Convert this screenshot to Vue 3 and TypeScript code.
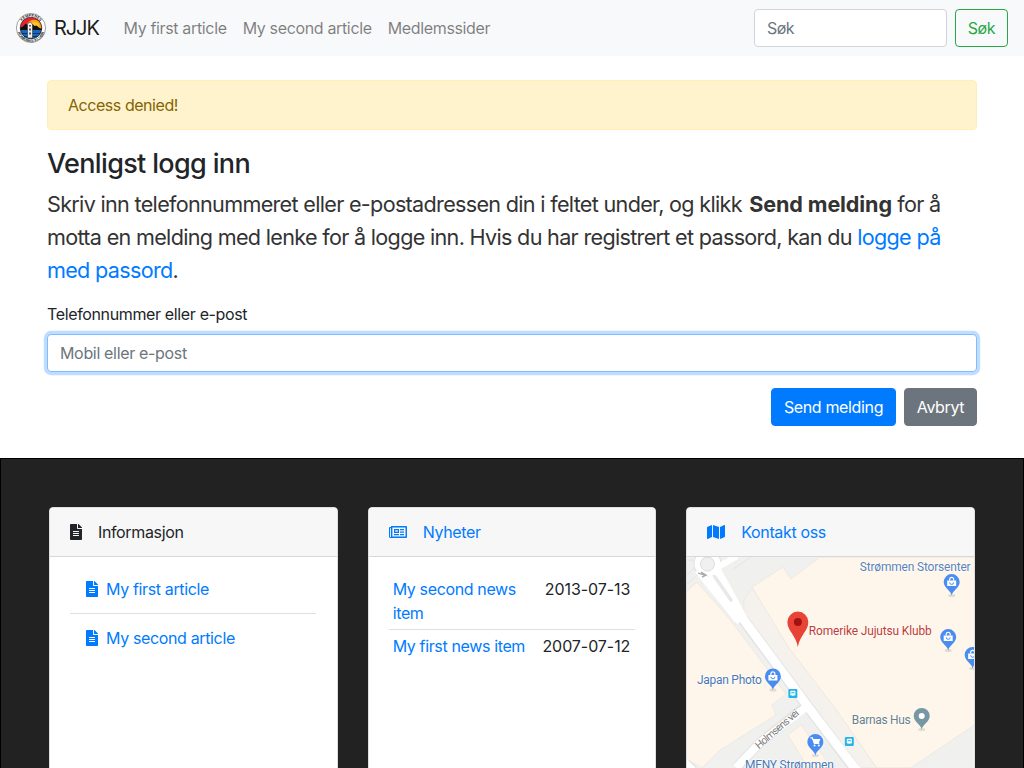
<script setup lang="ts">
interface Article { title: string }
interface NewsItem { title: string; date: string }
interface Pin { x: number; y: number; color: string; kind: 'bag' | 'cart' | 'dot' }

const navLinks: string[] = ['My first article', 'My second article', 'Medlemssider']
const articles: Article[] = [{ title: 'My first article' }, { title: 'My second article' }]
const news: NewsItem[] = [
  { title: 'My second news item', date: '2013-07-13' },
  { title: 'My first news item', date: '2007-07-12' },
]
const pins: Pin[] = [
  { x: 952, y: 582, color: '#4a8df0', kind: 'bag' },
  { x: 948.5, y: 637, color: '#4a8df0', kind: 'bag' },
  { x: 973, y: 655, color: '#4a8df0', kind: 'bag' },
  { x: 773, y: 676.5, color: '#4a8df0', kind: 'bag' },
  { x: 815.5, y: 742, color: '#4a8df0', kind: 'cart' },
  { x: 922, y: 716, color: '#7697a4', kind: 'dot' },
]
const stops = [
  { x: 788.5, y: 689 },
  { x: 845, y: 737 },
]
const filePath =
  'M224 136V0H24C10.700 0 0 10.700 0 24v464c0 13.300 10.700 24 24 24h336c13.300 0 24-10.700 24-24V160H248c-13.200 0-24-10.800-24-24zm64 236c0 6.600-5.400 12-12 12H108c-6.600 0-12-5.400-12-12v-8c0-6.600 5.400-12 12-12h168c6.600 0 12 5.400 12 12v8zm0-64c0 6.600-5.400 12-12 12H108c-6.600 0-12-5.400-12-12v-8c0-6.600 5.400-12 12-12h168c6.600 0 12 5.400 12 12v8zm0-72v8c0 6.600-5.400 12-12 12H108c-6.600 0-12-5.400-12-12v-8c0-6.600 5.400-12 12-12h168c6.600 0 12 5.400 12 12zm96-114.100v6.100H256V0h6.100c6.400 0 12.500 2.500 17 7l97.900 98c4.500 4.500 7 10.600 7 16.900z'
</script>

<template>
  <div class="page">
    <nav class="navbar">
      <a class="brand">
        <svg class="logo" viewBox="0 0 30 30">
          <defs>
            <clipPath id="disc"><circle cx="15" cy="15" r="10.800" /></clipPath>
            <path id="arc-top" d="M3.600 15a11.400 11.400 0 0 1 22.800 0" />
            <path id="arc-bottom" d="M.9 15a14.100 14.100 0 0 0 28.200 0" />
          </defs>
          <circle cx="15" cy="15" r="14.600" fill="#fff" stroke="#888" stroke-width=".8" />
          <g clip-path="url(#disc)">
            <rect width="30" height="17" fill="#e3262e" />
            <circle cx="18" cy="14" r="7.300" fill="#f9a51b" />
            <circle cx="19" cy="13" r="4" fill="#fdc72f" />
            <path d="M3 17.500V15l4-1.500 2.500-3 2 1.500 2-1 3 0 2 2 2-.5 3 2.500 4 1v1.500z" fill="#111" />
            <rect y="17" width="30" height="13" fill="#1568bd" />
            <path d="M4 20.500h22M4 23.500h22" stroke="#0b2851" stroke-width=".8" />
            <path d="M11.500 11 14 9l2.500 2V25h-5z" fill="#eee" stroke="#222" stroke-width=".5" />
            <path d="M14 12v1.500m0 2v2m0 2v2" stroke="#333" stroke-width="1.600" />
          </g>
          <circle cx="15" cy="15" r="10.800" fill="none" stroke="#111" stroke-width=".6" />
          <text class="seal"><textPath href="#arc-top" startOffset="50%" text-anchor="middle">KEMPENES</textPath></text>
          <text class="seal"><textPath href="#arc-bottom" startOffset="50%" text-anchor="middle">ROMERIKE KLUBB</textPath></text>
        </svg>
        <span class="brand-name">RJJK</span>
      </a>
      <a v-for="l in navLinks" :key="l" class="nav-link">{{ l }}</a>
      <form class="search" @submit.prevent>
        <input class="control search-input" placeholder="Søk" />
        <button class="btn outline">Søk</button>
      </form>
    </nav>

    <main class="content">
      <div class="alert">Access denied!</div>
      <h3>Venligst logg inn</h3>
      <p class="lead">
        Skriv inn telefonnummeret eller e-postadressen din i feltet under, og klikk <b>Send melding</b> for å<br />
        motta en melding med lenke for å logge inn. Hvis du har registrert et passord, kan du <a>logge på<br />
        med passord</a>.
      </p>
      <label for="contact">Telefonnummer eller e-post</label>
      <input id="contact" class="control focused" placeholder="Mobil eller e-post" />
      <div class="actions">
        <button class="btn primary">Send melding</button>
        <button class="btn secondary">Avbryt</button>
      </div>
    </main>

    <footer class="footer">
      <section class="card">
        <header class="card-header">
          <svg class="file" viewBox="0 0 384 512"><path :d="filePath" /></svg>
          <span class="info-title">Informasjon</span>
        </header>
        <ul class="articles">
          <li v-for="a in articles" :key="a.title">
            <a><svg class="file" viewBox="0 0 384 512"><path :d="filePath" /></svg><span>{{ a.title }}</span></a>
          </li>
        </ul>
      </section>

      <section class="card">
        <header class="card-header link">
          <svg class="wide" viewBox="0 0 18 12">
            <path fill-rule="evenodd" d="M2 0h15q1 0 1 1v10q0 1-1 1H1.500Q0 12 0 10.500V2q0-1 1-1h1zM3.400 1.500v9h13.100v-9zM1.100 2.200v8.300q0 .5.400.5t.5-.5V2.200z" />
            <path fill-rule="evenodd" d="M5 3h5v4H5zm1.300 1.200v1.600h2.400V4.200zM11 3h4v1.300h-4zM11 5.500h4v1.300h-4zM5 8h5v1.300H5zM11 8h4v1.300h-4z" />
          </svg>
          <span>Nyheter</span>
        </header>
        <div class="news">
          <div v-for="n in news" :key="n.title" class="news-row">
            <a>{{ n.title }}</a><span class="date">{{ n.date }}</span>
          </div>
        </div>
      </section>

      <section class="card">
        <header class="card-header link">
          <svg class="wide map-icon" viewBox="0 0 576 512">
            <path d="M0 117.660v346.320c0 11.320 11.430 19.060 21.940 14.860L160 416V32L20.120 87.950A32.006 32.006 0 0 0 0 117.660zM192 416l192 64V96L192 32v384zM554.060 33.160L416 96v384l139.880-55.950A31.996 31.996 0 0 0 576 394.340V48.020c0-11.320-11.430-19.060-21.940-14.860z" />
          </svg>
          <span>Kontakt oss</span>
        </header>
        <svg class="map" viewBox="687 557 287 211">
          <rect x="687" y="557" width="287" height="211" fill="#f0f0ef" />
          <g stroke="#ece6dd" stroke-width=".8">
            <path d="M744 600L752 588L877 768H856L744 616z" fill="#f5f2ed" />
            <path d="M752 587L783 567L791 579L820 557H975V725L911 768H877L835 708L789 648z" fill="#fef5eb" />
            <path d="M686 592L697 582L728 617L753 650L786 694L772 705L776 715L719 751L702 768L686 759z" fill="#fef5eb" />
            <path d="M788 735L801 725L832 768H808z" fill="#fef5eb" />
          </g>
          <path d="M687 575l12-12M687 584l18-16M733 569l18-12M687 560h13" stroke="#e3e4e5" fill="none" />
          <g fill="none" stroke="#e2e2e2">
            <path d="M707 563L742 618L809 708L854 768" stroke-width="11" />
            <path d="M805 707L760 743L736 768M686 764l8 8" stroke-width="10" />
            <circle cx="707.500" cy="563.500" r="10" stroke-width="8" />
          </g>
          <g fill="none" stroke="#fff">
            <path d="M698 570l10 13 32 39" stroke-width="7" />
            <path d="M716 569l10 18 18 33L809 708L857 771" stroke-width="9" />
            <path d="M708 577l30 42" stroke-width="9" />
            <path d="M808 706L760 743L736 768M684 762l10 10" stroke-width="8" />
            <circle cx="707.500" cy="563.500" r="10" stroke-width="6" />
            <path d="M718 567l19-11" stroke-width="6" />
          </g>
          <circle cx="707.500" cy="564" r="7" fill="#f0f0f0" stroke="#d8d8d8" stroke-width=".8" />
          <path d="M715 577l16 23" stroke="#e8e8e8" stroke-width="3.500" stroke-linecap="round" />
          <path d="M698 573l7 2m-4-3 5 3-4 2" stroke="#aaa" stroke-width="1.500" fill="none" />

          <g v-for="(s, i) in stops" :key="'s' + i" :transform="`translate(${s.x} ${s.y})`">
            <rect width="9" height="9" rx="1.200" fill="#23b4e8" />
            <rect x="2" y="1.800" width="5" height="5" rx=".7" fill="#fff" />
            <path d="M2.800 3.800h3.400M2.500 7h1m2 0h1" stroke="#23b4e8" stroke-width="1" />
          </g>
          <g v-for="(p, i) in pins" :key="i" :transform="`translate(${p.x} ${p.y})`">
            <ellipse cy="13.500" rx="3.500" ry="1.500" fill="#cfc9c0" opacity=".6" />
            <path d="M0 13.500C-1 8-8 6-8 0a8 8 0 0 1 16 0C8 6 1 8 0 13.500z" :fill="p.color" />
            <g v-if="p.kind === 'bag'">
              <path d="M-4.500-1.500h9V4h-9z" fill="#fff" />
              <path d="M-2-1.500v-1.200a2 2 0 0 1 4 0v1.200" fill="none" stroke="#fff" stroke-width="1.200" />
              <path d="M-2 .3a2 2 0 0 0 4 0" fill="none" :stroke="p.color" stroke-width="1" />
            </g>
            <g v-else-if="p.kind === 'cart'">
              <path d="M-5-4h2l2 5.500h5" fill="none" stroke="#fff" stroke-width="1.200" />
              <path d="M-3-3h8L3.500 1H-1z" fill="#fff" />
              <circle cx="-.8" cy="3.500" r="1" fill="#fff" /><circle cx="3.500" cy="3.500" r="1" fill="#fff" />
            </g>
            <circle v-else r="3" fill="#fff" />
          </g>
          <path d="M798 647C796 635 787.500 631 787.500 622a10.500 10.500 0 0 1 21 0C808.500 631 800 635 798 647z" fill="#e94335" />
          <circle cx="798" cy="622" r="4" fill="#a11312" />

          <g class="labels">
            <text x="860" y="570.500" textLength="111" fill="#5b82b9">Strømmen Storsenter</text>
            <text x="809" y="634.500" textLength="123" fill="#c13b32">Romerike Jujutsu Klubb</text>
            <text x="697" y="684.500" textLength="65" fill="#4b78b5">Japan Photo</text>
            <text x="852" y="724.500" textLength="59" fill="#6a8088">Barnas Hus</text>
            <text x="745" y="769.500" textLength="89" fill="#4b78b5">MENY Strømmen</text>
            <text class="road" transform="translate(759 749.500) rotate(-41)" textLength="54" fill="#777">Holmsens vei</text>
          </g>
        </svg>
      </section>
    </footer>
  </div>
</template>

<style>
body {
  margin: 0;
  overflow: hidden;
}
</style>

<style scoped>
* {
  box-sizing: border-box;
}
.page {
  height: 100vh;
  overflow: hidden;
  background: #fff;
  color: #212529;
  font: 400 16px/24px Inter, "Liberation Sans", sans-serif;
  letter-spacing: -0.36px;
}
a {
  color: #007bff;
  text-decoration: none;
}
.navbar {
  display: flex;
  align-items: center;
  height: 56px;
  padding: 0 16px;
  background: #f8f9fa;
}
.brand {
  display: flex;
  align-items: center;
  width: 91.500px;
  margin-right: 8px;
  color: rgba(0, 0, 0, 0.9);
  font-size: 20px;
  line-height: 30px;
  letter-spacing: -1.1px;
}
.brand-name {
  margin-left: 8px;
}
.logo {
  width: 30px;
  height: 30px;
}
.seal {
  font: 700 3.800px "Liberation Sans", sans-serif;
  letter-spacing: 0;
  fill: #222;
}
.nav-link {
  padding: 0 8px;
  color: rgba(0, 0, 0, 0.5);
  letter-spacing: -0.35px;
  white-space: nowrap;
}
.search {
  display: flex;
  gap: 8px;
  margin-left: auto;
}
.control {
  display: block;
  width: 100%;
  height: 38px;
  padding: 6px 12px;
  border: 1px solid #ced4da;
  border-radius: 4px;
  background: #fff;
  color: #495057;
  font: inherit;
  letter-spacing: -0.33px;
  outline: 0;
}
.control::placeholder {
  color: #6c757d;
  opacity: 1;
}
.search-input {
  width: 193px;
  letter-spacing: -0.6px;
}
.focused {
  border-color: #80bdff;
  box-shadow: 0 0 0 3.200px rgba(0, 123, 255, 0.25);
}
.btn {
  height: 38px;
  padding: 0;
  border: 1px solid;
  border-radius: 4px;
  color: #fff;
  font: inherit;
  letter-spacing: inherit;
  white-space: nowrap;
}
.outline {
  width: 53px;
  border-color: #28a745;
  background: transparent;
  color: #28a745;
}
.primary {
  width: 125px;
  border-color: #007bff;
  background: #007bff;
}
.secondary {
  width: 73px;
  border-color: #6c757d;
  background: #6c757d;
}
.content {
  height: 402px;
  padding: 24px 47px 0;
}
.alert {
  height: 50px;
  padding: 12px 20px;
  border: 1px solid #ffeeba;
  border-radius: 4px;
  background: #fff3cd;
  color: #856404;
  letter-spacing: -0.45px;
}
h3 {
  margin: 17px 0 7px;
  font-size: 27px;
  font-weight: 500;
  line-height: 34px;
  letter-spacing: -0.65px;
}
.lead {
  margin: 0 0 15px;
  color: #333;
  font-size: 21.600px;
  line-height: 33px;
  letter-spacing: -0.69px;
  white-space: nowrap;
}
.lead b {
  margin-left: 2px;
  letter-spacing: -0.12px;
}
label {
  display: block;
  margin-bottom: 8px;
}
.actions {
  display: flex;
  justify-content: flex-end;
  gap: 8px;
  margin-top: 16px;
}
.footer {
  display: grid;
  grid-template-columns: repeat(3, 1fr);
  gap: 30px;
  height: 420px;
  padding: 48px 48px 0;
  border: 1px solid #000;
  background: #222;
}
.card {
  overflow: hidden;
  border: 1px solid #dfdfdf;
  border-radius: 4px 4px 0 0;
  background: #fff;
}
.card-header {
  display: flex;
  align-items: center;
  height: 49px;
  padding: 0 20px;
  border-bottom: 1px solid #d8d8d8;
  background: #f7f7f7;
}
.card-header.link {
  color: #007bff;
}
.file {
  flex: none;
  width: 12px;
  height: 16px;
  fill: currentColor;
}
.wide {
  width: 18px;
  height: 12px;
  margin-right: 16px;
  fill: currentColor;
}
.map-icon {
  height: 16px;
}
.info-title {
  margin-left: 16px;
}
.articles {
  margin: 20px 21px 0 20px;
  padding: 0;
  list-style: none;
}
.articles li {
  height: 49px;
  padding-left: 16px;
}
.articles li + li {
  padding-top: 12px;
}
.articles li:first-child {
  height: 37px;
  border-bottom: 1px solid #dfdfdf;
}
.articles a {
  display: flex;
  align-items: center;
  gap: 8px;
}
.news {
  margin: 15px 20px 0;
}
.news-row {
  display: grid;
  grid-template-columns: 140px 1fr;
  padding: 5px 5px 4px 4px;
}
.news-row + .news-row {
  padding-top: 4px;
  border-top: 1px solid #dfdfdf;
}
.date {
  letter-spacing: -0.06px;
  text-align: right;
  white-space: nowrap;
}
.map {
  display: block;
  width: 100%;
  height: 211px;
}
.labels {
  font: 400 12px Roboto, "Liberation Sans", sans-serif;
  letter-spacing: 0;
  paint-order: stroke;
  stroke: #fff;
  stroke-width: 1px;
}
.road {
  font-size: 10.500px;
}
</style>
